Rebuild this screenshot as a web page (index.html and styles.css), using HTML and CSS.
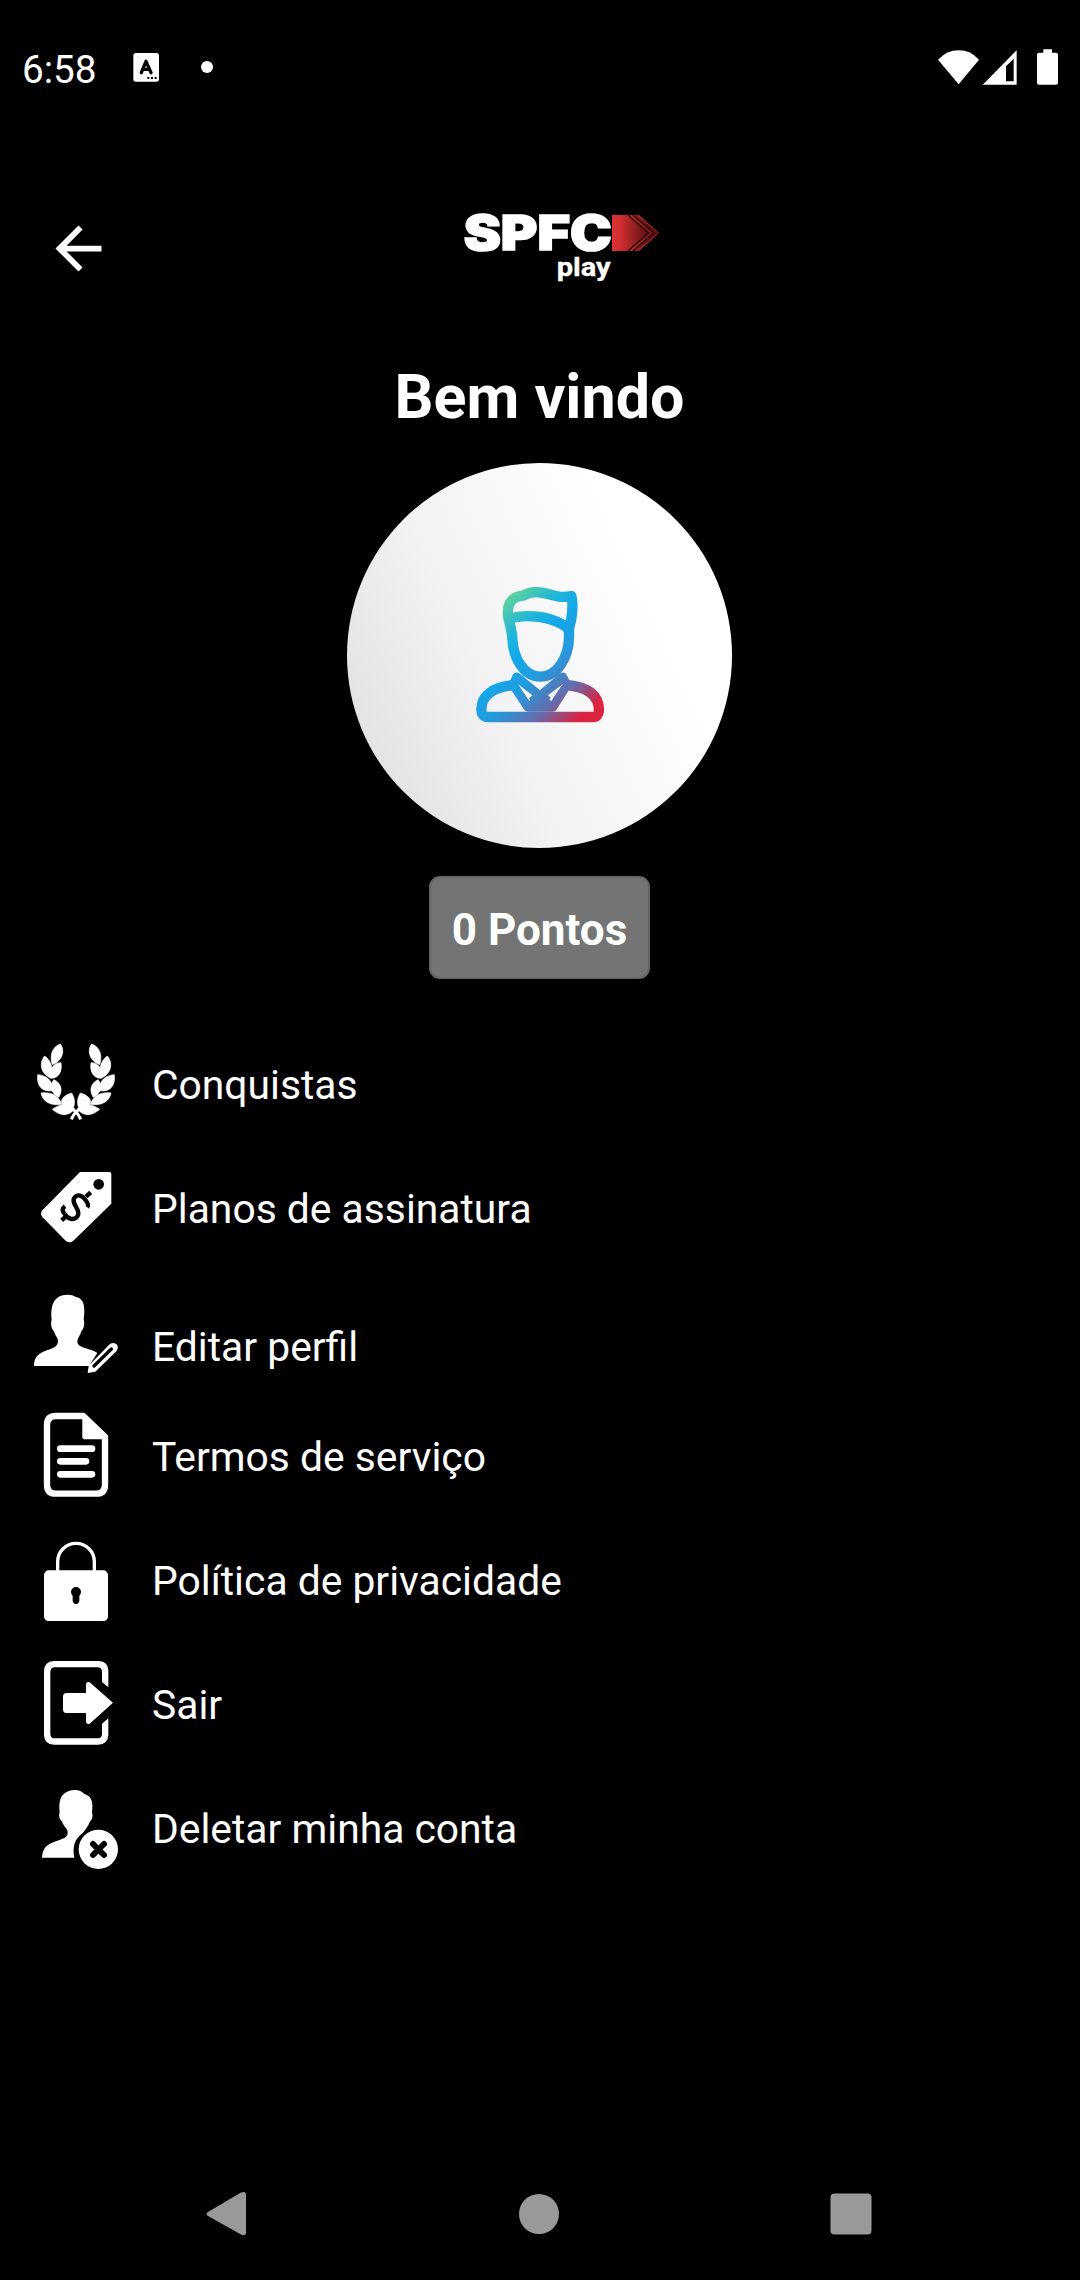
FILE: index.html
```html
<!DOCTYPE html>
<html lang="pt-BR">
<head>
<meta charset="utf-8">
<title>SPFC Play</title>
<link rel="stylesheet" href="styles.css">
</head>
<body>
<div class="screen">
  <div class="status">
    <span class="clock">6:58</span>
    <svg class="notices" viewBox="360 0 300 240">
      <rect x="400" y="69" width="77" height="86" rx="8" fill="#fff"/>
      <path d="M424 128l14-34 15 34M430 118h17" fill="none" stroke="#000" stroke-width="10" stroke-linecap="round" stroke-linejoin="round"/>
      <path d="M442 141h6v6h-6zM453 141h6v6h-6zM464 141h6v6h-6z" fill="#000"/>
      <circle cx="621" cy="111" r="18" fill="#fff"/>
    </svg>
    <svg class="system" viewBox="0 0 540 240" fill="#fff">
      <path d="M114 89Q140 61 176 61T237 89L176 163Z"/>
      <path fill-rule="evenodd" d="M248 164L350 61V164ZM318 109V154H341V86Z"/>
      <path d="M430 58h26v10h12q6 0 6 6v84q0 6-6 6h-51q-6 0-6-6V74q0-6 6-6h13z"/>
    </svg>
  </div>

  <header class="header">
    <svg class="back" viewBox="0 0 24 24"><path fill="#fff" d="M20 11H7.830l5.590-5.590L12 4l-8 8 8 8 1.410-1.410L7.830 13H20z"/></svg>
    <svg class="logo" viewBox="0 0 660 270">
      <defs>
        <linearGradient id="red" gradientUnits="userSpaceOnUse" x1="486" y1="0" x2="628" y2="0">
          <stop offset="0" stop-color="#dc3336"/><stop offset=".2" stop-color="#cc2d30"/><stop offset=".75" stop-color="#5d1012"/><stop offset="1" stop-color="#4a0c0e"/>
        </linearGradient>
        <linearGradient id="edge" gradientUnits="userSpaceOnUse" x1="530" y1="0" x2="628" y2="0">
          <stop offset="0" stop-color="#d33437"/><stop offset="1" stop-color="#711719"/>
        </linearGradient>
      </defs>
      <text class="brand" x="41" y="150" textLength="444" lengthAdjust="spacingAndGlyphs">SPFC</text>
      <text class="sub" x="320" y="227" textLength="162" lengthAdjust="spacingAndGlyphs">play</text>
      <path d="M486 45H566L628 99L566 153H486Z" fill="url(#red)"/>
      <g fill="none" stroke-width="4">
        <path d="M535 46L597 99L535 152M549 46L611 99L549 152" stroke="#240607"/>
        <path d="M542 46L604 99L542 152M564 46L625 99L564 152" stroke="url(#edge)"/>
      </g>
    </svg>
  </header>

  <main class="profile">
    <h1 class="title">Bem vindo</h1>
    <div class="avatar">
      <svg viewBox="0 0 480 510">
        <defs>
          <linearGradient id="person" gradientUnits="userSpaceOnUse" x1="115" y1="95" x2="410" y2="420">
            <stop offset="0" stop-color="#62d59a"/><stop offset=".24" stop-color="#1db4dc"/><stop offset=".36" stop-color="#14a8ea"/><stop offset=".55" stop-color="#239bdd"/><stop offset=".76" stop-color="#646daf"/><stop offset=".96" stop-color="#dc2340"/>
          </linearGradient>
        </defs>
        <g fill="none" stroke="url(#person)" stroke-width="31" stroke-linejoin="round">
          <path d="M145 140C139 101 153 76 190 74C223 53 261 69 292 76Q315 80 334 75C340 95 337 125 333 150C326 165 327 175 327 199C326 260 291 317 241 317C192 317 159 261 157 202C156 179 149 160 145 140Z"/>
          <path d="M147 144C178 132 232 133 268 144Q310 157 325 174"/>
          <path d="M163 342C100 348 64 372 64 416Q65 438 83 438H398Q416 438 417 418C417 372 382 348 320 342"/>
          <path d="M170 318L160 342L204 409H278L320 342L308 318L240 375Z" stroke-width="27"/>
          <path d="M176 322L239 398L304 322" stroke-width="29"/>
          <path d="M214 402L240 385L266 402Z" stroke-width="28"/>
        </g>
        <path d="M174 340L217 373L205 384ZM308 340L264 373L276 384ZM222 332Q240 334 258 332L240 350Z" fill="#f7f7f7"/>
      </svg>
    </div>
    <div class="points">0 Pontos</div>
  </main>

  <nav class="menu">
    <a class="row">
      <svg class="icon" viewBox="0 -21 360 372">
        <defs>
          <g id="branch">
            <path d="M121 42C136 60 128 93 97 104C88 78 96 50 121 42Z"/>
            <path d="M74 78C59 95 57 128 93 145C99 122 98 95 74 78Z"/>
            <path d="M123 98C98 98 86 122 93 145C118 144 127 122 123 98Z"/>
            <path d="M53 134C49 168 66 187 99 182C99 152 80 136 53 134Z"/>
            <path d="M101 149C87 170 96 193 116 202C130 180 123 158 101 149Z"/>
            <path d="M63 189C68 215 92 228 125 223C116 195 90 185 63 189Z"/>
            <path d="M155 189C168 210 165 232 153 240C122 234 108 203 155 189Z"/>
            <path d="M97 238C118 222 145 218 164 236C149 258 122 261 97 238Z"/>
            <path d="M182 268Q171 244 154 236" fill="none" stroke="#fff" stroke-width="9"/>
          </g>
        </defs>
        <g fill="#fff" stroke="#fff" stroke-width="2"><use href="#branch"/><use href="#branch" transform="matrix(-1 0 0 1 336 0)"/></g>
      </svg>
      <span class="label">Conquistas</span>
    </a>
    <a class="row">
      <svg class="icon" viewBox="0 351 360 372">
        <path d="M180 426H268Q274 426 274 432V521L160 632Q149 641 137 632L67 561Q59 551 67 541Z" fill="#fff"/>
        <circle cx="236" cy="463" r="16" fill="#000"/>
        <path d="M193 506C186 497 174 492 165 501C149 518 182 537 174 556C164 575 142 567 134 551M193 506C202 516 208 524 202 532M134 551C126 543 125 536 135 529M198 500L212 487M125 571L139 558" fill="none" stroke="#000" stroke-width="13"/>
      </svg>
      <span class="label">Planos de assinatura</span>
    </a>
    <a class="row">
      <svg class="icon" viewBox="0 -27 360 372">
        <path d="M42 258C42 235 52 223 73 214C94 205 114 203 114 183C114 173 105 168 102 154C95 148 91 132 95 119C91 80 99 44 143 44Q158 44 168 51C193 55 196 83 191 119C195 132 191 148 184 154C180 169 172 174 172 187C174 204 210 205 232 219L207 258Z" fill="#fff"/>
        <path d="M203 279L206 257L269 193Q282 184 291 194Q297 202 289 214L226 275Z" fill="#fff"/>
        <path d="M222 258L274 207" stroke="#000" stroke-width="10" stroke-linecap="round"/>
      </svg>
      <span class="label low">Editar perfil</span>
    </a>
    <a class="row">
      <svg class="icon" viewBox="0 345 360 372">
        <path d="M108 408H190L255 470V614Q255 641 228 641H108Q81 641 81 614V435Q81 408 108 408Z" fill="none" stroke="#fff" stroke-width="19" stroke-linejoin="round"/>
        <path d="M187 408L260 470V478H195Q187 478 187 470Z" fill="#fff"/>
        <path d="M121 506H216M121 544H198M121 583H216" stroke="#fff" stroke-width="20" stroke-linecap="round"/>
      </svg>
      <span class="label">Termos de serviço</span>
    </a>
    <a class="row">
      <svg class="icon" viewBox="0 -3 360 372">
        <path d="M113 155V125a55 55 0 0 1 110 0V155" fill="none" stroke="#fff" stroke-width="10"/>
        <rect x="72" y="151" width="192" height="152" rx="14" fill="#fff"/>
        <path d="M158 243V228Q153 222 153 216a15 15 0 0 1 30 0Q183 222 178 228V243Q176 252 168 252T158 243Z" fill="#000"/>
      </svg>
      <span class="label">Política de privacidade</span>
    </a>
    <a class="row">
      <svg class="icon" viewBox="0 369 360 372">
        <path d="M236 423Q265 425 265 451V502L246 486V456Q246 442 232 442H105Q91 442 91 456V641Q91 655 105 655H232Q246 655 246 641V611L265 595V645Q264 674 234 674H102Q73 674 72 645V453Q73 424 102 423Z" fill="#fff"/>
        <path d="M140 519H198V491Q201 483 209 487L279 548L209 611Q201 615 198 607V579H140Q130 579 129 569V529Q130 519 140 519Z" fill="#fff"/>
      </svg>
      <span class="label">Sair</span>
    </a>
    <a class="row">
      <svg class="icon" viewBox="0 -9 360 372">
        <path d="M66 263C68 235 78 226 101 216C127 206 143 204 143 188C143 175 132 173 126 154C119 150 115 137 119 126C113 83 130 60 166 60Q182 60 193 72C216 78 220 98 216 128C220 138 216 150 210 154C206 168 196 179 189 188C163 207 157 230 163 263Z" fill="#fff"/>
        <circle cx="235" cy="238" r="59" fill="#fff"/>
        <path d="M219 222L252 255M252 222L219 255" stroke="#000" stroke-width="18" stroke-linecap="round"/>
      </svg>
      <span class="label">Deletar minha conta</span>
    </a>
  </nav>

  <div class="navbar">
    <svg viewBox="0 0 48 48"><path d="M7 22L40 2.500Q45 .5 45 5V42Q45 47 40 44.500L7 26Q4 24 7 22Z"/></svg>
    <svg viewBox="0 0 48 48"><circle cx="24" cy="24" r="20"/></svg>
    <svg viewBox="0 0 48 48"><rect x="3.500" y="3.500" width="41" height="41" rx="4"/></svg>
  </div>
</div>
</body>
</html>
```
FILE: styles.css
```css
* { box-sizing: border-box; }

body {
  margin: 0;
  background: #000;
  color: #fff;
  font-family: Roboto, "Liberation Sans", sans-serif;
}

svg { display: block; flex: none; }

.screen {
  width: 1080px;
  height: 2280px;
  display: flex;
  flex-direction: column;
  background: #000;
}

.status {
  height: 140px;
  padding: 30px 0 0 22px;
  display: flex;
  align-items: flex-start;
}

.clock {
  width: 98px;
  font-size: 38.7px;
  line-height: 80px;
}

.notices { width: 100px; height: 80px; }
.system { width: 180px; height: 80px; margin-left: auto; }

.header {
  height: 220px;
  display: grid;
  grid-template-columns: 450px 220px;
  align-items: start;
}

.back { width: 69px; height: 69px; margin: 74px 0 0 44px; }
.logo { width: 220px; height: 90px; margin-top: 60px; }

.brand {
  font: 900 146px Inter, sans-serif;
  fill: #fff;
  stroke: #fff;
  stroke-width: 5px;
}

.sub {
  font: 700 80px Roboto, sans-serif;
  fill: #fff;
  stroke: #fff;
  stroke-width: 1px;
}

.profile {
  height: 663px;
  padding-right: 1px;
  display: flex;
  flex-direction: column;
  align-items: center;
}

.title {
  margin: 0;
  height: 103px;
  padding-top: 1px;
  font-size: 61px;
  font-weight: 700;
  line-height: 72px;
}

.avatar {
  width: 385px;
  height: 385px;
  flex: none;
  display: grid;
  place-items: center;
  border-radius: 50%;
  background: linear-gradient(65deg, #dfdfdf 5%, #f2f2f2 38%, #fff 75%);
}

.avatar svg { width: 160px; height: 170px; }

.points {
  width: 221px;
  height: 103px;
  margin-top: 28px;
  display: grid;
  place-items: center;
  padding-top: 5px;
  border: 2px solid #666;
  border-radius: 11px;
  background: #747474;
  font-size: 44px;
  font-weight: 700;
}

.menu {
  display: flex;
  flex-direction: column;
  padding-left: 20px;
}

.row { height: 124px; display: flex; align-items: center; }
.icon { width: 120px; height: 124px; }
.label { margin-left: 12px; font-size: 40.8px; line-height: 48px; white-space: nowrap; }
.low { margin-top: 28px; }

.navbar {
  margin-top: auto;
  height: 132px;
  padding: 0 205px 0 201px;
  display: flex;
  align-items: center;
  justify-content: space-between;
}

.navbar svg { width: 48px; height: 48px; fill: #999; }
.navbar svg:nth-child(2) { margin-left: 2px; }
```
